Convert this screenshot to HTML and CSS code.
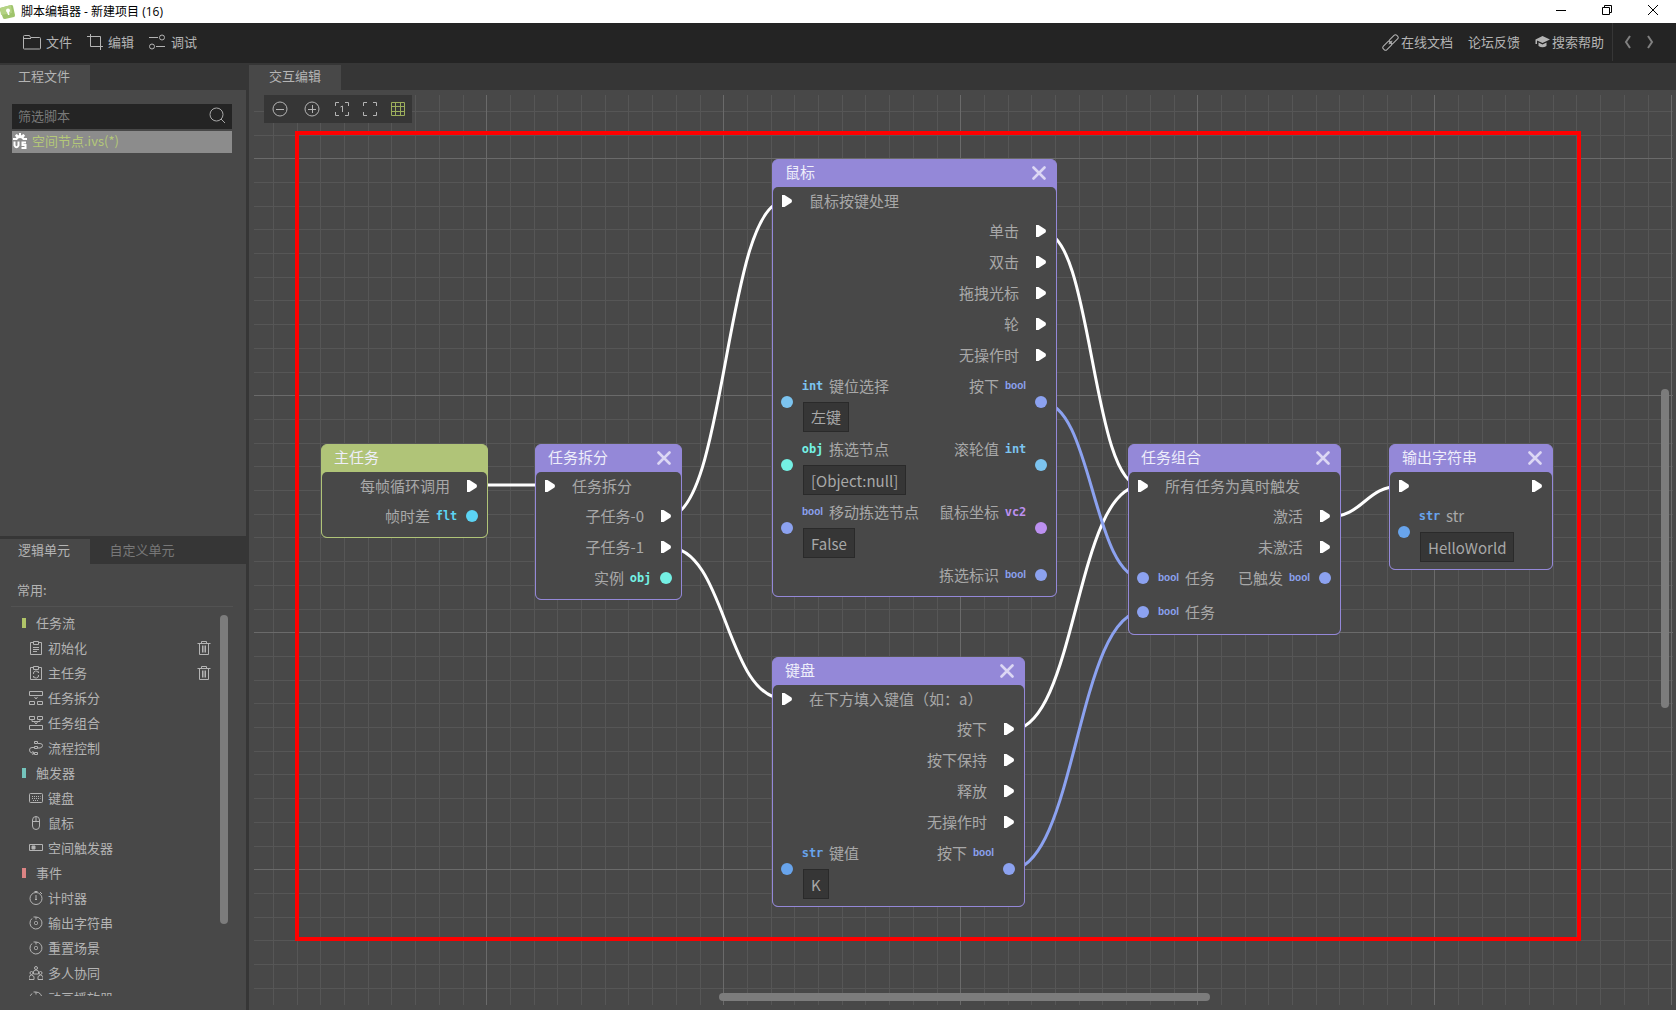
FILE: index.html
```html
<!DOCTYPE html>
<html lang="zh-CN">
<head>
<meta charset="utf-8">
<title>脚本编辑器 - 新建项目 (16)</title>
<link rel="stylesheet" href="styles.css">
</head>
<body>
<svg class="defs" width="0" height="0" aria-hidden="true">
  <symbol id="play" viewBox="0 0 12 14"><path d="M1 1h2.500l7 4.500q1 1.500 0 3L3.500 13H1z" fill="#fff"/></symbol>
  <symbol id="dot" viewBox="0 0 12 12"><circle cx="6" cy="6" r="6" fill="currentColor"/></symbol>
  <symbol id="cross" viewBox="0 0 14 14"><path d="M1.500 1.500l11 11M12.500 1.500l-11 11" stroke="#dcd7f4" stroke-width="2.600" stroke-linecap="round"/></symbol>
  <symbol id="trash" viewBox="0 0 14 14"><path d="M.5 2.500h13M4.500 2.500V.5h5v2M2.500 2.500v11h9v-11M5.500 4.500v7M7 4.500v7M8.500 4.500v7" fill="none" stroke="currentColor"/></symbol>
  <symbol id="cycle" viewBox="0 0 14 14"><path d="M3 2.500A6 6 0 1 0 7 1M4.500 1H7v2.500" fill="none" stroke="currentColor"/><rect x="5.500" y="5.500" width="3" height="3" rx="1" fill="none" stroke="currentColor"/></symbol>
</svg>

<header class="titlebar">
  <svg class="logo" width="16" height="16" viewBox="0 0 16 16"><path d="M0 4l11-3q2 0 2 1l2 9q0 2-1 2L5 15q-2 0-2-1L0 6z" fill="#9fc46c"/><path d="M0 4l11-3 1 8L1 11z" fill="#b4d384"/><circle cx="8" cy="6.500" r="2" fill="#fff"/><path d="M7 8h2l.5 3H8z" fill="#fff"/></svg>
  <h1 class="titlebar-text">脚本编辑器 - 新建项目 (16)</h1>
  <div class="window-buttons">
    <button type="button" aria-label="最小化"><svg width="12" height="12"><path d="M1 6.500h10" stroke="#000"/></svg></button>
    <button type="button" aria-label="还原"><svg width="12" height="12" fill="none" stroke="#000"><path d="M1.500 3.500h7v7h-7zM3.500 3V1.500h7v7H9"/></svg></button>
    <button type="button" aria-label="关闭"><svg width="12" height="12"><path d="M1 1l10 10M11 1L1 11" stroke="#000"/></svg></button>
  </div>
</header>

<nav class="menubar">
  <div class="menu-group">
    <button type="button"><svg width="18" height="16" fill="none" stroke="currentColor"><path d="M.5 14.500v-12q0-1 1-1h5l1 2h9q1 0 1 1v10q0 .5-1 .5h-15q-1 0-1-.5zM.5 4.500H8"/></svg>文件</button>
    <button type="button" class="menu-edit"><svg width="16" height="16" fill="none" stroke="currentColor"><path d="M0 2.500h13.500V16M3.500 0v12.500H16"/></svg>编辑</button>
    <button type="button"><svg width="17" height="16" fill="none" stroke="currentColor"><path d="M0 3.500h9M7 12.500h9"/><circle cx="13" cy="3.500" r="2.500"/><circle cx="3" cy="12.500" r="2.500"/></svg>调试</button>
  </div>
  <div class="menu-group menu-links">
    <a href="#docs"><svg width="17" height="17" fill="none" stroke="currentColor"><g transform="rotate(-45 8.500 8.500)"><rect x="-1" y="6" width="10" height="5" rx="2"/><rect x="8" y="6" width="10" height="5" rx="2"/><path d="M6 8.500h5"/></g></svg>在线文档</a>
    <a href="#forum">论坛反馈</a>
    <a href="#help"><svg width="15" height="14" fill="currentColor"><path d="M7.500 1L15 4.500 7.500 8 2 5.500V9H.5V4.500zM3.500 7.500l4 2 4-2v3.500q-4 2.500-8 0z"/></svg>搜索帮助</a>
  </div>
  <div class="menu-history">
    <button type="button" aria-label="后退"><svg width="8" height="14" fill="none" stroke="#808080" stroke-width="2"><path d="M6 1L2 7l4 6"/></svg></button>
    <button type="button" aria-label="前进"><svg width="8" height="14" fill="none" stroke="#808080" stroke-width="2"><path d="M2 1l4 6-4 6"/></svg></button>
  </div>
</nav>

<main class="workspace">
  <aside class="sidebar">
    <section class="panel panel-files">
      <div class="tabs"><button type="button" class="tab is-active">工程文件</button></div>
      <div class="panel-body files-body">
        <label class="search"><input type="text" placeholder="筛选脚本" aria-label="筛选脚本"><svg width="17" height="17" fill="none" stroke="#a8a8a8"><circle cx="7.500" cy="7.500" r="6.500"/><path d="M12 12l4 4"/></svg></label>
        <a class="file-row" href="#file"><svg width="14" height="16" viewBox="0 0 14 16" fill="#fff"><path d="M6 0h2v2.500L10.500 1 12 2.500 10.500 5H14v2h-4Q9 5 7 5T4 7H0V5h3.500L2 2.500 3.500 1 6 2.500z"/><path d="M1.500 8.500v4q2 3.500 4 0v-4M13 9.500H9.500v2.500h3v3H8.500" fill="none" stroke="#fff" stroke-width="2"/></svg>空间节点.ivs(*)</a>
      </div>
    </section>
    <section class="panel panel-units">
      <div class="tabs"><button type="button" class="tab is-active">逻辑单元</button><button type="button" class="tab tab-custom">自定义单元</button></div>
      <div class="panel-body units-body">
        <h2 class="units-title">常用:</h2>
        <div class="units-scroll">
          <ul class="units">
            <li class="category green">任务流</li>
            <li><svg viewBox="0 0 14 14"><path d="M4 1.500H1.500v12h11v-12H10M4.500.5h5v3h-5zM4 6.500h6M4 8.500h6M4 10.500h4"/></svg>初始化<button type="button" aria-label="删除初始化"><svg><use href="#trash"/></svg></button></li>
            <li><svg viewBox="0 0 14 14"><path d="M4 1.500H1.500v12h11v-12H10M4.500.5h5v3h-5zM4.500 8a2.500 2.500 0 0 1 5-1V5.500M9.500 9a2.500 2.500 0 0 1-5 1v1.500"/></svg>主任务<button type="button" aria-label="删除主任务"><svg><use href="#trash"/></svg></button></li>
            <li><svg viewBox="0 0 14 14"><path d="M.5.5h13v4H.5zM.5 10.500h5v3h-5zM8.500 10.500h5v3h-5zM5.500 6L7 8l1.500-2"/></svg>任务拆分</li>
            <li><svg viewBox="0 0 14 14"><path d="M.5 9.500h13v4H.5zM.5.5h5v3h-5zM8.500.5h5v3h-5zM3 4v1.500h8V4M5.500 6L7 8l1.500-2"/></svg>任务组合</li>
            <li><svg viewBox="0 0 14 14"><path d="M5.500.5h3v2h-3zM5.500 5.500h3v2h-3zM5.500 11.500h3v2h-3zM9 2.500h2q2.500 0 2.500 2T11 7H9M5 6.500H3Q.5 6.500.5 9T3 12h2M3.500 10L5 12l-1.500 2"/></svg>流程控制</li>
            <li class="category teal">触发器</li>
            <li><svg viewBox="0 0 14 14"><path d="M1.500 2.500h11q1 0 1 1v7q0 1-1 1h-11q-1 0-1-1v-7q0-1 1-1z"/><path d="M3 5.500h8.500M3 7.500h8.500M4 9.500h6" stroke-dasharray="1 1"/></svg>键盘</li>
            <li><svg viewBox="0 0 14 14"><rect x="3.500" y=".5" width="7" height="13" rx="3.500"/><path d="M3.500 5.500h7M7 .5v5"/></svg>鼠标</li>
            <li><svg viewBox="0 0 14 14"><path d="M.5 3.500h13v6H.5z"/><path d="M3 5h3v3H3z" fill="currentColor"/></svg>空间触发器</li>
            <li class="category red">事件</li>
            <li><svg viewBox="0 0 14 14"><circle cx="7" cy="7.500" r="6"/><path d="M7 4v5M6 8.500h2M5.500.5h3M11 1l2 2"/></svg>计时器</li>
            <li><svg viewBox="0 0 14 14"><use href="#cycle"/></svg>输出字符串</li>
            <li><svg viewBox="0 0 14 14"><use href="#cycle"/></svg>重置场景</li>
            <li><svg viewBox="0 0 14 14"><circle cx="7" cy="2" r="1.500"/><circle cx="2.500" cy="7" r="1.500"/><circle cx="11.500" cy="7" r="1.500"/><path d="M4.500 8V6q0-2 2.500-2t2.500 2v2zM0 13.500v-3q2.500-3 5 0v3zM9 13.500v-3q2.500-3 5 0v3z"/></svg>多人协同</li>
            <li><svg viewBox="0 0 14 14"><use href="#cycle"/></svg>动画播放器</li>
          </ul>
          <div class="scroll-track"><div class="scroll-thumb"></div></div>
        </div>
      </div>
    </section>
  </aside>

  <section class="editor panel">
    <div class="tabs"><button type="button" class="tab tab-editor is-active">交互编辑</button></div>
    <div class="canvas">
      <svg class="grid" aria-hidden="true">
        <defs>
          <pattern id="cells" x="-5" y="63" width="237" height="237" patternUnits="userSpaceOnUse">
            <path d="M24.500 0v237M48.500 0v237M71.500 0v237M95.500 0v237M119.500 0v237M142.500 0v237M166.500 0v237M190.500 0v237M214.500 0v237M0 24.500h237M0 48.500h237M0 71.500h237M0 95.500h237M0 119.500h237M0 142.500h237M0 166.500h237M0 190.500h237M0 214.500h237" stroke="#565656"/>
            <path d="M.5 0v237M0 .5h237" stroke="#6a6a6a"/>
          </pattern>
        </defs>
        <rect width="100%" height="100%" fill="url(#cells)"/>
      </svg>
      <svg class="wires" aria-hidden="true">
        <g transform="translate(-249 -90)" fill="none" stroke="#fff" stroke-width="3">
          <path d="M472 485H547"/>
          <path d="M667 517C727 517 725 201 785 201"/>
          <path d="M667 547C727 547 725 699 785 699"/>
          <path d="M1043 232C1093 232 1091 486 1141 486"/>
          <path d="M1011 730C1077 730 1075 486 1141 486"/>
          <path d="M1327 517C1365 517 1364 486 1402 486"/>
          <g stroke="#8ca2f0"><path d="M1041 402C1093 402 1092 579 1144 579"/><path d="M1009 870C1077 870 1076 611 1144 611"/></g>
        </g>
      </svg>

      <div class="toolbar">
        <button type="button" aria-label="缩小"><svg><circle cx="8" cy="8" r="7"/><path d="M4 8.500h8"/></svg></button>
        <button type="button" aria-label="放大"><svg><circle cx="8" cy="8" r="7"/><path d="M4 8.500h8M8.500 4v8"/></svg></button>
        <button type="button" aria-label="实际大小"><svg><path d="M1.500 5V1.500H5M11 1.500h3.500V5M14.500 11v3.500H11M5 14.500H1.500V11M6.500 6l2-1v6"/></svg></button>
        <button type="button" aria-label="适合窗口"><svg><path d="M1.500 5V1.500H5M11 1.500h3.500V5M14.500 11v3.500H11M5 14.500H1.500V11"/></svg></button>
        <button type="button" class="is-on" aria-label="网格"><svg><path d="M1.500 1.500h13v13h-13zM5.500 1.500v13M10.500 1.500v13M1.500 5.500h13M1.500 10.500h13"/></svg></button>
      </div>

      <article class="node node-main">
        <h3>主任务</h3>
        <div class="ports">
          <div class="row exec first"><span class="out">每帧循环调用<svg class="play"><use href="#play"/></svg></span></div>
          <div class="row"><span class="out">帧时差<b class="type flt">flt</b><svg class="dot flt"><use href="#dot"/></svg></span></div>
        </div>
      </article>

      <article class="node node-split">
        <h3>任务拆分<button type="button" aria-label="关闭"><svg><use href="#cross"/></svg></button></h3>
        <div class="ports">
          <div class="row exec first"><span class="in"><svg class="play"><use href="#play"/></svg>任务拆分</span></div>
          <div class="row exec"><span class="out">子任务-0<svg class="play"><use href="#play"/></svg></span></div>
          <div class="row exec"><span class="out">子任务-1<svg class="play"><use href="#play"/></svg></span></div>
          <div class="row"><span class="out">实例<b class="type obj">obj</b><svg class="dot obj"><use href="#dot"/></svg></span></div>
        </div>
      </article>

      <article class="node node-mouse">
        <h3>鼠标<button type="button" aria-label="关闭"><svg><use href="#cross"/></svg></button></h3>
        <div class="ports">
          <div class="row exec first"><span class="in"><svg class="play"><use href="#play"/></svg>鼠标按键处理</span></div>
          <div class="row exec"><span class="out">单击<svg class="play"><use href="#play"/></svg></span></div>
          <div class="row exec"><span class="out">双击<svg class="play"><use href="#play"/></svg></span></div>
          <div class="row exec"><span class="out">拖拽光标<svg class="play"><use href="#play"/></svg></span></div>
          <div class="row exec"><span class="out">轮<svg class="play"><use href="#play"/></svg></span></div>
          <div class="row exec"><span class="out">无操作时<svg class="play"><use href="#play"/></svg></span></div>
          <div class="row field-row">
            <div class="in"><svg class="dot int"><use href="#dot"/></svg><div class="field"><label for="key-pos"><b class="type int">int</b>键位选择</label><select id="key-pos"><option>左键</option></select></div></div>
            <div class="out"><span class="field"><span>按下<b class="type bool">bool</b></span></span><svg class="dot bool"><use href="#dot"/></svg></div>
          </div>
          <div class="row field-row">
            <div class="in"><svg class="dot obj"><use href="#dot"/></svg><div class="field"><label for="pick"><b class="type obj">obj</b>拣选节点</label><input id="pick" type="text" value="[Object:null]"></div></div>
            <div class="out"><span class="field"><span>滚轮值<b class="type int">int</b></span></span><svg class="dot int"><use href="#dot"/></svg></div>
          </div>
          <div class="row field-row">
            <div class="in"><svg class="dot bool"><use href="#dot"/></svg><div class="field"><label for="move"><b class="type bool">bool</b>移动拣选节点</label><input id="move" type="text" value="False"></div></div>
            <div class="out"><span class="field"><span>鼠标坐标<b class="type vec">vc2</b></span></span><svg class="dot vec"><use href="#dot"/></svg></div>
          </div>
          <div class="row"><span class="out">拣选标识<b class="type bool">bool</b><svg class="dot bool"><use href="#dot"/></svg></span></div>
        </div>
      </article>

      <article class="node node-keyboard">
        <h3>键盘<button type="button" aria-label="关闭"><svg><use href="#cross"/></svg></button></h3>
        <div class="ports">
          <div class="row exec first"><span class="in"><svg class="play"><use href="#play"/></svg>在下方填入键值（如：a）</span></div>
          <div class="row exec"><span class="out">按下<svg class="play"><use href="#play"/></svg></span></div>
          <div class="row exec"><span class="out">按下保持<svg class="play"><use href="#play"/></svg></span></div>
          <div class="row exec"><span class="out">释放<svg class="play"><use href="#play"/></svg></span></div>
          <div class="row exec"><span class="out">无操作时<svg class="play"><use href="#play"/></svg></span></div>
          <div class="row field-row">
            <div class="in"><svg class="dot str"><use href="#dot"/></svg><div class="field"><label for="key"><b class="type str">str</b>键值</label><input id="key" type="text" value="K"></div></div>
            <div class="out"><span class="field"><span>按下<b class="type bool">bool</b></span></span><svg class="dot bool"><use href="#dot"/></svg></div>
          </div>
        </div>
      </article>

      <article class="node node-merge">
        <h3>任务组合<button type="button" aria-label="关闭"><svg><use href="#cross"/></svg></button></h3>
        <div class="ports">
          <div class="row exec first"><span class="in"><svg class="play"><use href="#play"/></svg>所有任务为真时触发</span></div>
          <div class="row exec"><span class="out">激活<svg class="play"><use href="#play"/></svg></span></div>
          <div class="row exec"><span class="out">未激活<svg class="play"><use href="#play"/></svg></span></div>
          <div class="row"><span class="in"><svg class="dot bool"><use href="#dot"/></svg><b class="type bool">bool</b>任务</span><span class="out">已触发<b class="type bool">bool</b><svg class="dot bool"><use href="#dot"/></svg></span></div>
          <div class="row tall"><span class="in"><svg class="dot bool"><use href="#dot"/></svg><b class="type bool">bool</b>任务</span></div>
        </div>
      </article>

      <article class="node node-print">
        <h3>输出字符串<button type="button" aria-label="关闭"><svg><use href="#cross"/></svg></button></h3>
        <div class="ports">
          <div class="row exec first"><span class="in"><svg class="play"><use href="#play"/></svg></span><span class="out"><svg class="play"><use href="#play"/></svg></span></div>
          <div class="row field-row">
            <div class="in"><svg class="dot str"><use href="#dot"/></svg><div class="field"><label for="text"><b class="type str">str</b>str</label><input id="text" type="text" value="HelloWorld"></div></div>
          </div>
        </div>
      </article>

      <div class="highlight"></div>
      <div class="canvas-scroll-x"></div>
      <div class="canvas-scroll-y"></div>
    </div>
  </section>
</main>
</body>
</html>
```
FILE: styles.css
```css
* { box-sizing: border-box; }

body {
  margin: 0;
  height: 100vh;
  display: flex;
  flex-direction: column;
  overflow: hidden;
  background: #363636;
  color: #b4b4b4;
  font: 13px/20px "Noto Sans CJK SC", sans-serif;
}

button, input, select {
  font: inherit;
  color: inherit;
  background: none;
  border: 0;
  padding: 0;
  margin: 0;
}

a { color: inherit; text-decoration: none; }
h1, h2, h3, ul { margin: 0; padding: 0; font-size: inherit; font-weight: 400; list-style: none; }
svg { display: block; flex: none; }
.defs { position: absolute; }

/* Window title */
.titlebar {
  display: flex;
  align-items: center;
  height: 23px;
  gap: 5px;
  background: #fff;
  color: #000;
}
.titlebar-text { font: 12px/20px "Open Sans", "Noto Sans CJK SC", sans-serif; }
.window-buttons { display: flex; gap: 34px; margin-left: auto; padding: 0 17px 4px 0; }

/* Main menu */
.menubar { display: flex; align-items: stretch; height: 40px; padding-bottom: 2px; background: #242424; }
.menu-group { display: flex; align-items: center; gap: 15px; padding-left: 23px; }
.menu-group button, .menu-group a { display: flex; align-items: center; gap: 5px; }
.menu-links { margin-left: auto; padding-right: 8px; }
.menu-links a { gap: 2px; }
.menu-history {
  display: flex;
  align-items: center;
  gap: 14px;
  padding: 0 22px 0 11px;
  border-left: 1px solid #363636;
}

/* Docked panels */
.workspace { display: flex; flex: 1; min-height: 0; gap: 3px; padding-top: 2px; }
.sidebar { display: flex; flex-direction: column; flex: 0 0 246px; gap: 3px; }
.panel { display: flex; flex-direction: column; min-height: 0; }
.panel-files { flex: 1 1 0; }
.panel-units { flex: 1 1 0; }
.tabs { display: flex; flex: none; height: 25px; }
.tab { width: 90px; padding: 0 4px 4px 2px; text-align: center; }
.tab.is-active { background: #484848; }
.tab-custom { width: 106px; color: #787878; }
.tab-editor { width: 92px; padding: 0 0 4px; }
.panel-body { flex: 1; min-height: 0; background: #484848; }

.files-body { display: flex; flex-direction: column; gap: 2px; padding: 14px 14px 0 12px; }
.search { display: flex; align-items: center; height: 25px; padding: 0 6px 2px; background: #242424; }
.search input { flex: 1; min-width: 0; outline: 0; }
.search input::placeholder { color: #787878; opacity: 1; }
.file-row { display: flex; align-items: center; gap: 5px; height: 22px; padding: 0 0 2px 1px; background: #8c8c8c; color: #b4c878; }

.units-body { display: flex; flex-direction: column; padding: 14px 13px 14px 11px; }
.units-title { height: 29px; padding: 2px 6px; border-bottom: 1px solid #525252; }
.units-scroll { display: flex; flex: 1; min-height: 0; margin-top: 3px; padding-right: 5px; }
.units { flex: 1; overflow: hidden; }
.units li { display: flex; align-items: center; gap: 5px; height: 25px; padding-left: 18px; }
.units svg { width: 14px; height: 14px; fill: none; stroke: currentColor; }
.units button { margin-left: auto; padding-right: 9px; }
.units .category { gap: 10px; padding-left: 11px; }
.category::before { content: ""; width: 4px; height: 10px; background: currentColor; }
.category.green::before { background: #b0c468; }
.category.teal::before { background: #74c4bc; }
.category.red::before { background: #dc8484; }
.scroll-track { width: 8px; padding-top: 5px; }
.scroll-thumb { height: 81%; border-radius: 4px; background: #7c7c7c; }

/* Node canvas */
.editor { flex: 1; min-width: 0; }
.canvas { position: relative; flex: 1; overflow: hidden; background: #484848; }
.grid { position: absolute; left: 5px; top: 5px; width: calc(100% - 8px); height: calc(100% - 10px); }
.wires { position: absolute; left: 0; top: 0; width: 100%; height: 100%; }
.toolbar {
  position: absolute;
  left: 15px;
  top: 5px;
  display: flex;
  align-items: center;
  gap: 12px;
  height: 28px;
  padding: 0 6px 0 8px;
  background: #363636;
}
.toolbar button:first-child { margin-right: 4px; }
.toolbar button:nth-child(2) { margin-right: 2px; }
.toolbar svg { width: 16px; height: 16px; fill: none; stroke: currentColor; }
.toolbar .is-on { color: #9cae5c; }
.highlight { position: absolute; left: 46px; top: 41px; width: 1286px; height: 810px; border: 4px solid #f00; pointer-events: none; }
.canvas-scroll-x { position: absolute; left: 470px; bottom: 9px; width: 491px; height: 8px; border-radius: 4px; background: #7c7c7c; }
.canvas-scroll-y { position: absolute; right: 7px; top: 299px; width: 8px; height: 319px; border-radius: 4px; background: #7c7c7c; }

.node {
  --frame: #9488d8;
  position: absolute;
  border: 1px solid var(--frame);
  border-radius: 6px;
  background: var(--frame);
  color: #a8a8a8;
  font-size: 15px;
}
.node-main { --frame: #b0c478; left: 72px; top: 354px; width: 167px; }
.node-split { left: 286px; top: 354px; width: 147px; }
.node-mouse { left: 523px; top: 69px; width: 285px; }
.node-keyboard { left: 523px; top: 567px; width: 253px; }
.node-merge { left: 879px; top: 354px; width: 213px; }
.node-print { left: 1140px; top: 354px; width: 164px; }

.node h3 {
  display: flex;
  align-items: center;
  justify-content: space-between;
  height: 27px;
  padding: 0 10px 4px 12px;
  color: #eeeefa;
}
.node h3 button { padding-top: 2px; }
.node h3 svg { width: 14px; height: 14px; }
.ports { padding-bottom: 5px; border-radius: 5px; background: #484848; }
.row { display: flex; align-items: center; height: 31px; padding: 0 9px 2px 8px; }
.row.first { height: 29px; }
.row.tall { height: 35px; padding-bottom: 0; }
.in, .out { display: flex; align-items: center; gap: 10px; white-space: nowrap; }
.out { margin-left: auto; }
.exec .in, .exec .out { gap: 16px; }
.play { width: 12px; height: 14px; }
.dot { width: 12px; height: 12px; }
.type {
  display: inline-flex;
  justify-content: center;
  width: 19px;
  font: 700 12px/20px "DejaVu Sans Mono", monospace;
}
.type.bool { font: 700 10px/20px "Liberation Sans", sans-serif; }
.row > .out .type { margin-left: -3px; }
.row > .in > .type { margin-right: -3px; }

.field-row { height: 63px; }
.field { display: flex; flex-direction: column; align-items: flex-start; height: 63px; }
.field label, .field > span { display: flex; align-items: center; gap: 7px; height: 32px; }
.row .field .type { margin: 0; }
.field input, .field select {
  height: 30px;
  padding: 0 7px;
  border: 1px solid #2a2a2a;
  background: #363636;
  appearance: none;
  field-sizing: content;
}

.flt { color: #5cd4f4; }
.obj { color: #74f0e4; }
.int { color: #7cc4f0; }
.bool { color: #8ca2f0; }
.vec { color: #bc90f0; }
.str { color: #68a4ec; }
```
